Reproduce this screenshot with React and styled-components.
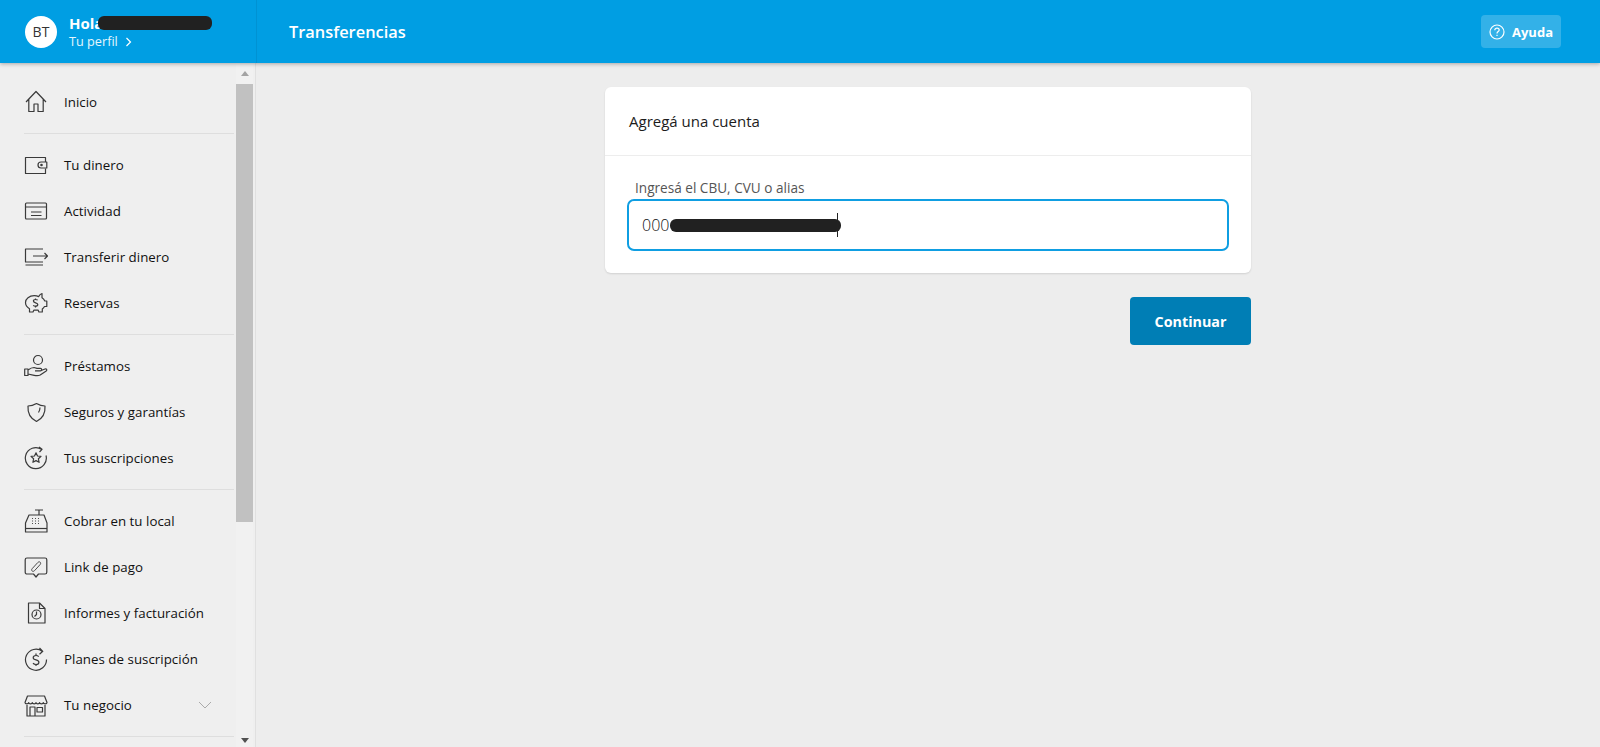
import React from 'react';
import styled, { createGlobalStyle } from 'styled-components';

const GlobalStyle = createGlobalStyle`
  html, body { margin: 0; height: 100%; }
  body {
    font-family: 'Open Sans', 'Liberation Sans', sans-serif;
    background: #ededed;
    color: #1a1a1a;
  }
  * { box-sizing: border-box; }
`;

const Page = styled.div`
  height: 100vh;
  display: flex;
  flex-direction: column;
  overflow: hidden;
`;

const Header = styled.header`
  position: relative;
  z-index: 2;
  flex: 0 0 63px;
  display: flex;
  align-items: stretch;
  background: #009ee3;
  color: #fff;
  box-shadow: 0 1px 4px rgba(0, 0, 0, 0.3);
`;
const Profile = styled.div`
  flex: 0 0 257px;
  display: flex;
  align-items: center;
  gap: 12px;
  padding-left: 25px;
  border-right: 1px solid rgba(0, 0, 0, 0.07);
`;
const Avatar = styled.div`
  width: 32px;
  height: 32px;
  border-radius: 50%;
  background: #fff;
  color: #333;
  font-size: 14px;
  display: flex;
  align-items: center;
  justify-content: center;
`;
const Greeting = styled.div`
  position: relative;
  display: flex;
  flex-direction: column;
  width: 160px;
  padding-top: 1px;
`;
const Hello = styled.span`
  font-size: 15px;
  line-height: 19px;
  font-weight: 700;
`;
const PerfilLink = styled.span`
  display: flex;
  align-items: center;
  gap: 7px;
  font-size: 12.7px;
  line-height: 17px;
  color: #e6f6fd;
`;
const Redaction = styled.span`
  position: absolute;
  background: #212121;
  border-radius: 6px;
  left: ${({ $left }) => $left}px;
  top: ${({ $top }) => $top}px;
  width: ${({ $width }) => $width}px;
  height: ${({ $height }) => $height}px;
`;
const Title = styled.h1`
  margin: 0;
  padding-left: 32px;
  flex: 1;
  display: flex;
  align-items: center;
  font-size: 16.4px;
  font-weight: 600;
`;
const HelpButton = styled.button`
  align-self: center;
  width: 80px;
  height: 33px;
  margin-right: 39px;
  border: 0;
  border-radius: 4px;
  padding: 0 0 0 8px;
  display: flex;
  align-items: center;
  gap: 7px;
  background: rgba(255, 255, 255, 0.2);
  color: #fff;
  font-family: inherit;
  font-size: 13px;
  font-weight: 700;
`;

const Body = styled.div`
  flex: 1;
  min-height: 0;
  display: flex;
`;
const Sidebar = styled.aside`
  flex: 0 0 256px;
  display: flex;
  background: #efefef;
  border-right: 1px solid #e0e0e0;
  padding-right: 2px;
`;
const Nav = styled.nav`
  flex: 0 0 236px;
  padding: 8px 2px 0 24px;
  overflow: hidden;
`;
const Section = styled.div`
  padding: 8px 0;
  border-bottom: 1px solid #dedede;
`;
const Item = styled.a`
  height: 46px;
  display: flex;
  align-items: center;
  gap: 16px;
  font-size: 13.3px;
  font-weight: 500;
  letter-spacing: 0.03px;
  color: #111;
`;
const ItemIcon = styled.svg`
  flex: 0 0 24px;
  width: 24px;
  height: 24px;
  fill: none;
  stroke: #3a3a3a;
  stroke-width: 1.2;
  stroke-linejoin: round;
`;
const ItemChevron = styled.svg`
  margin-left: auto;
  margin-right: 22px;
  width: 14px;
  height: 8px;
  fill: none;
  stroke: #aaa;
  stroke-width: 1;
`;
const Scrollbar = styled.div`
  flex: 0 0 17px;
  display: flex;
  flex-direction: column;
  background: #f1f1f1;
`;
const ScrollArrow = styled.div`
  flex: ${({ $up }) => ($up ? '0 0 21px' : '0 0 14px')};
  display: flex;
  align-items: center;
  justify-content: center;
  margin-top: ${({ $up }) => ($up ? '0' : 'auto')};
  &::before {
    content: '';
    border-left: 4.5px solid transparent;
    border-right: 4.5px solid transparent;
    border-bottom: ${({ $up }) => ($up ? '5px solid #a3a3a3' : '0')};
    border-top: ${({ $up }) => ($up ? '0' : '5px solid #505050')};
  }
`;
const ScrollThumb = styled.div`
  height: 438px;
  background: #c1c1c1;
`;

const Main = styled.main`
  flex: 1;
  padding-top: 24px;
`;
const Column = styled.div`
  width: 646px;
  margin: 0 auto;
  display: flex;
  flex-direction: column;
  align-items: flex-end;
  gap: 24px;
`;
const Card = styled.section`
  width: 646px;
  height: 186px;
  background: #fff;
  border-radius: 6px;
  box-shadow: 0 1px 2px rgba(0, 0, 0, 0.12);
`;
const CardHeader = styled.h2`
  margin: 0;
  height: 69px;
  padding: 0 24px;
  display: flex;
  align-items: center;
  font-size: 15px;
  font-weight: 500;
  color: #1c1c1c;
  border-bottom: 1px solid #ededed;
`;
const CardBody = styled.div`
  padding: 22px 22px 0;
`;
const Label = styled.label`
  display: block;
  padding-left: 8px;
  font-size: 13.6px;
  line-height: 20px;
  height: 20px;
  color: #555;
`;
const Field = styled.div`
  position: relative;
  height: 52px;
  width: 602px;
  margin-top: 1px;
  padding-left: 13px;
  display: flex;
  align-items: center;
  border: 2px solid #0f9ee2;
  border-radius: 7px;
  font-size: 16px;
  font-weight: 300;
  color: #111;
`;
const Caret = styled.span`
  position: absolute;
  left: 208px;
  top: 12px;
  width: 1px;
  height: 24px;
  background: #222;
`;
const Submit = styled.button`
  width: 121px;
  height: 48px;
  border: 0;
  border-radius: 4px;
  background: #007eb5;
  color: #fff;
  font-family: inherit;
  font-size: 14.3px;
  font-weight: 700;
`;

const icons = {
  home: (
    <path d="M2 12 12 1.500 22 12M4.800 9.500V21.500h5.200v-7.500h4v7.500h5.200V9.500" />
  ),
  wallet: (
    <>
      <path d="M21.500 9V4.500H1.500v16h20v-5" />
      <path d="M22.800 9H17a3 3 0 0 0 0 6h5.800z" />
      <circle cx="17.500" cy="12" r="0.700" />
    </>
  ),
  activity: (
    <>
      <rect x="1.500" y="4" width="21" height="16" rx="1" />
      <path d="M1.500 8h21M7 13h10.500M7 16.500h10.500" />
    </>
  ),
  transfer: (
    <path d="M19 4H1.500v13H19M1.500 20H19M9 11h14.500M20.500 8l3 3-3 3" />
  ),
  piggy: (
    <>
      <path d="M18 2.500v4.200c1.300.8 2.200 1.900 2.800 3.300h2v5.500h-2.300c-.6 1-1.300 1.800-2.200 2.500V21h-3.400l-.7-1.800H9.800L9 21H5.500v-3.300C3 16.200 1.500 14 1.500 11.500c0-3.800 3.800-6.800 8.700-6.800 1.600 0 3.200.3 4.500.9.700-1.700 1.900-2.800 3.300-3.100z" />
      <path d="M11.500 7.500v1m0 7v1m2.200-7.400c-.5-.4-1.300-.6-2.100-.6-1.300 0-2.200.6-2.200 1.600 0 2.300 4.400 1.100 4.400 3.400 0 1-1 1.700-2.300 1.700-.9 0-1.800-.3-2.300-.8" />
    </>
  ),
  loan: (
    <>
      <circle cx="14" cy="6" r="4.500" />
      <path d="M.700 15h3.300v6.500H.700zM4 16c2-1.500 4-2.500 6-2.500l3 .8h3.500c1.500 0 1.500 2.500 0 2.500H11M16 17l5-2c1.500-.5 2.500 1 1.200 2l-6 4c-2 1-4 .8-6 .3L4 20" />
    </>
  ),
  shield: (
    <>
      <path d="M12.500 3.500c2.500 1.500 5.500 2.500 8.500 2.500.5 7-2.500 12.500-8.500 15.500C6.500 18.500 3.500 13 4 6c3 0 6-1 8.500-2.500z" />
      <path d="M16 7.500c0 2-.5 3.500-1.500 5" />
    </>
  ),
  star: (
    <>
      <path d="M17.500 3.300A10.500 10.500 0 1 0 22 9.500M15 1l3 2.300-2.500 2.700" />
      <path d="m12 6.800 1.500 3.200 3.500.4-2.600 2.400.7 3.500-3.100-1.700-3.100 1.700.7-3.500L7 10.400l3.500-.4z" />
    </>
  ),
  register: (
    <>
      <path d="M11 1h8M15 1v5M5 6h15l3 8v9H1.500v-9z" />
      <path d="M1.500 19.500h21.500" />
      <path d="M8 9.500h1m2 0h1m2 0h1M8 12h1m2 0h1m2 0h1M8 14.500h1m2 0h1m2 0h1" strokeWidth="0.9" />
    </>
  ),
  link: (
    <>
      <path d="M3 3h18c1 0 1.800.8 1.800 1.800v12.400c0 1-.8 1.800-1.800 1.800h-6.500L12 22l-2.500-3H3c-1 0-1.800-.8-1.800-1.800V4.800C1.200 3.800 2 3 3 3z" />
      <path d="M8.300 13.500 13.800 7.500c1.800-1.800 4 .4 2.200 2.200l-5.500 6c-1.800 1.800-4-.4-2.200-2.200z" strokeWidth="0.9" />
    </>
  ),
  report: (
    <>
      <path d="M4.500 2h11l5.500 5.500V22H4.500z" />
      <path d="M15.500 2v5.500H21" />
      <circle cx="12.500" cy="13.500" r="4.500" />
      <path d="M12.500 10.500v3l-2 2" />
    </>
  ),
  plan: (
    <>
      <path d="M18.500 4.500A10.500 10.500 0 1 0 22.500 12.500M15.500 1l3.300 3.300-3.300 3" />
      <path d="M12 6.500v1.500m0 9.500v1.500m2.700-9.300c-.6-.8-1.600-1.200-2.700-1.200-1.600 0-2.800.9-2.800 2.200 0 3 5.700 1.500 5.700 4.500 0 1.300-1.300 2.300-2.900 2.300-1.300 0-2.400-.5-3-1.300" />
    </>
  ),
  store: (
    <>
      <path d="M3.500 3h17l2.500 6.500c0 1.700-3.600 1.700-3.700 0 0 1.700-3.600 1.700-3.700 0 0 1.700-3.600 1.700-3.600 0 0 1.700-3.700 1.700-3.700 0 0 1.700-3.600 1.700-3.600 0 0 1.700-3.700 1.700-3.700 0z" />
      <path d="M3 12v11h18V12M6 23v-9h5v9M13 14.500h5.500V19H13z" />
    </>
  ),
};

const sections = [
  [{ label: 'Inicio', icon: 'home' }],
  [
    { label: 'Tu dinero', icon: 'wallet' },
    { label: 'Actividad', icon: 'activity' },
    { label: 'Transferir dinero', icon: 'transfer' },
    { label: 'Reservas', icon: 'piggy' },
  ],
  [
    { label: 'Préstamos', icon: 'loan' },
    { label: 'Seguros y garantías', icon: 'shield' },
    { label: 'Tus suscripciones', icon: 'star' },
  ],
  [
    { label: 'Cobrar en tu local', icon: 'register' },
    { label: 'Link de pago', icon: 'link' },
    { label: 'Informes y facturación', icon: 'report' },
    { label: 'Planes de suscripción', icon: 'plan' },
    { label: 'Tu negocio', icon: 'store', more: true },
  ],
];

const App = () => (
  <Page>
    <GlobalStyle />
    <Header>
      <Profile>
        <Avatar>BT</Avatar>
        <Greeting>
          <Hello>Hola</Hello>
          <PerfilLink>
            Tu perfil
            <svg width="7" height="10" viewBox="0 0 7 10" fill="none" stroke="#fff" strokeWidth="1.2">
              <path d="m1.500 1 4 4-4 4" />
            </svg>
          </PerfilLink>
          <Redaction $left={29} $top={3} $width={114} $height={14} />
        </Greeting>
      </Profile>
      <Title>Transferencias</Title>
      <HelpButton>
        <svg width="16" height="16" viewBox="0 0 16 16" fill="none" stroke="#fff" strokeWidth="1.200">
          <circle cx="8" cy="8" r="7" />
          <path d="M5.800 6.200c0-1.300 1-2 2.200-2s2.200.8 2.200 1.900c0 1.500-2.200 1.500-2.200 3.300M8 10.800v1.200" />
        </svg>
        Ayuda
      </HelpButton>
    </Header>
    <Body>
      <Sidebar>
        <Nav>
          {sections.map((items) => (
            <Section key={items[0].label}>
              {items.map((item) => (
                <Item key={item.label}>
                  <ItemIcon viewBox="0 0 24 24">{icons[item.icon]}</ItemIcon>
                  {item.label}
                  {item.more && (
                    <ItemChevron viewBox="0 0 14 8">
                      <path d="m1 1 6 6 6-6" />
                    </ItemChevron>
                  )}
                </Item>
              ))}
            </Section>
          ))}
        </Nav>
        <Scrollbar>
          <ScrollArrow $up />
          <ScrollThumb />
          <ScrollArrow />
        </Scrollbar>
      </Sidebar>
      <Main>
        <Column>
          <Card>
            <CardHeader>Agregá una cuenta</CardHeader>
            <CardBody>
              <Label>Ingresá el CBU, CVU o alias</Label>
              <Field>
                000
                <Redaction $left={41} $top={18} $width={171} $height={13} />
                <Caret />
              </Field>
            </CardBody>
          </Card>
          <Submit>Continuar</Submit>
        </Column>
      </Main>
    </Body>
  </Page>
);

export default App;
